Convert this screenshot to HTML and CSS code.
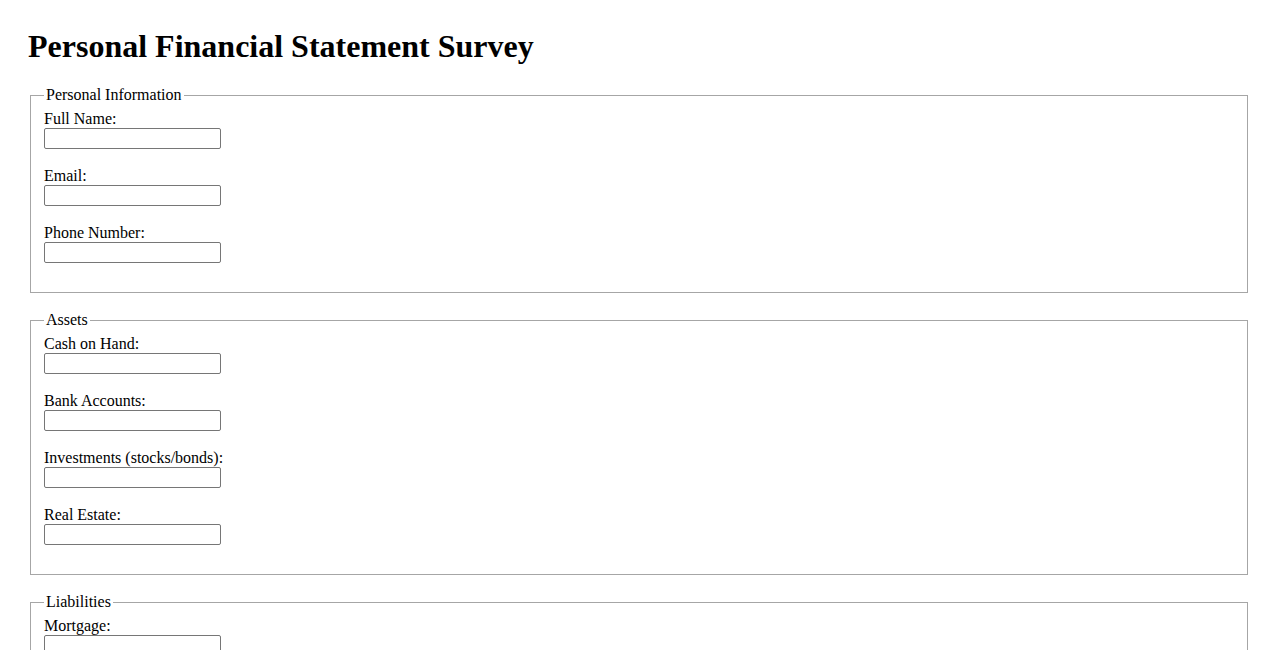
FILE: index.html
```html
<!DOCTYPE html>
<html lang="en">
<head>
<meta charset="utf-8">
<title>Personal Financial Statement Survey</title>
<link rel="stylesheet" href="styles.css">
</head>
<body>
<h1 class="title">Personal Financial Statement Survey</h1>
<form class="survey">
  <fieldset class="section">
    <legend class="section-legend">Personal Information</legend>
    <div class="field"><label class="field-label" for="name">Full Name:</label><input class="field-input" type="text" id="name"></div>
    <div class="field"><label class="field-label" for="email">Email:</label><input class="field-input" type="text" id="email"></div>
    <div class="field"><label class="field-label" for="phone">Phone Number:</label><input class="field-input" type="text" id="phone"></div>
  </fieldset>
  <fieldset class="section">
    <legend class="section-legend">Assets</legend>
    <div class="field"><label class="field-label" for="cash">Cash on Hand:</label><input class="field-input" type="text" id="cash"></div>
    <div class="field"><label class="field-label" for="bank">Bank Accounts:</label><input class="field-input" type="text" id="bank"></div>
    <div class="field"><label class="field-label" for="inv">Investments (stocks/bonds):</label><input class="field-input" type="text" id="inv"></div>
    <div class="field"><label class="field-label" for="re">Real Estate:</label><input class="field-input" type="text" id="re"></div>
  </fieldset>
  <fieldset class="section">
    <legend class="section-legend">Liabilities</legend>
    <div class="field"><label class="field-label" for="mort">Mortgage:</label><input class="field-input" type="text" id="mort"></div>
    <div class="field"><label class="field-label" for="loans">Loans:</label><input class="field-input" type="text" id="loans"></div>
    <div class="field"><label class="field-label" for="cc">Credit Card Debt:</label><input class="field-input" type="text" id="cc"></div>
  </fieldset>
</form>
</body>
</html>
```
FILE: styles.css
```css
html, body {
  background: #ffffff;
}
body {
  margin: 29px 28px 28px 28px;
  font-family: "Liberation Serif", "Times New Roman", serif;
  font-size: 16px;
  color: #000000;
}
.title {
  font-size: 32px;
  font-weight: bold;
  line-height: 35.4px;
  margin: 0 0 22px 0;
}
.survey {
  margin: 0;
}
.section {
  margin: 0 2px 18px 2px;
  padding: 6px 13px 11px 13px;
  border: 1px solid #a6a6a6;
  min-width: 0;
}
.section-legend {
  padding: 0 2px;
  line-height: 18px;
}
.field {
  display: flex;
  flex-direction: column;
  align-items: flex-start;
  margin-bottom: 18px;
}
.field-label {
  line-height: 18px;
}
.field-input {
  box-sizing: border-box;
  width: 177px;
  height: 21px;
  margin: 0;
  padding: 1px 2px;
  border: 1px solid #767676;
  border-radius: 2px;
  font-family: "Liberation Sans", Arial, sans-serif;
  font-size: 13.33px;
  background: #ffffff;
}
```
